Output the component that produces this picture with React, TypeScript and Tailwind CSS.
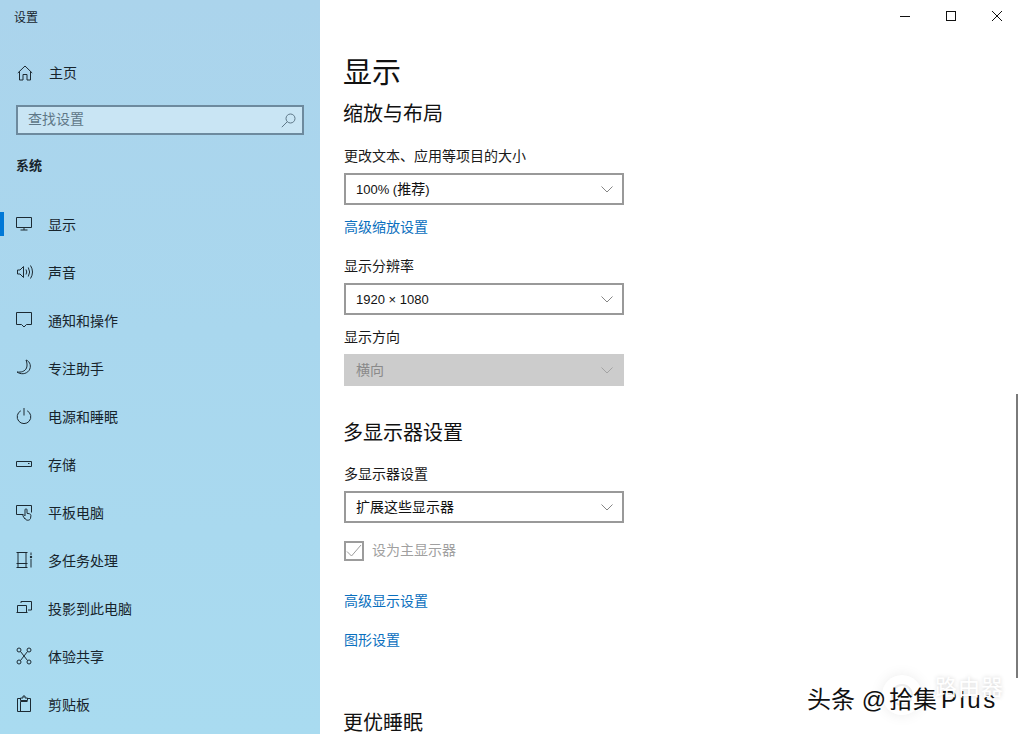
import React from "react";

const font = { fontFamily: '"Noto Sans CJK SC", sans-serif' };

function I({ children }: { children: React.ReactNode }) {
  return (
    <svg width="18" height="18" viewBox="0 0 18 18" fill="none" stroke="#1c2a33" strokeWidth="1" className="shrink-0">
      {children}
    </svg>
  );
}

const navItems: [string, React.ReactNode][] = [
  ["显示", <I key="a"><path d="M.5 2.500h15v10h-15zM8 12.500v2.500M4.500 15h7" /></I>],
  ["声音", <I key="b"><path d="M1.500 7h2.500l3.500-3.500v11l-3.500-3.500h-2.500zM10 6.500q1.500 2.500 0 5M12.300 4.500q2.700 4.500 0 9M14.500 2.500q4 6.500 0 13" /></I>],
  ["通知和操作", <I key="c"><path d="M.5 1.500h15v12h-5l-2.500 2.500-2.500-2.500h-5z" /></I>],
  ["专注助手", <I key="d"><path d="M10 1c4.500 1.500 5.500 7 3 10.500-3 4-8.500 4-12 1.500 4 .5 8-.5 9.500-4 1-2.500.5-5.500-.5-8z" /></I>],
  ["电源和睡眠", <I key="e"><path d="M8 1v7.500M4.800 3.800a6.800 6.800 0 1 0 6.400 0" /></I>],
  ["存储", <I key="f"><path d="M.5 6.500h15v5h-15zM12 8.500h1.500" /></I>],
  ["平板电脑", <I key="g"><path d="M7 11.500H.5v-9h15v7M9 16l-2-3c-.5-1 .7-1.700 1.400-.9l.6.700v-6c0-1.300 2-1.300 2 0v3.500l2.500.5c1 .2 1.500 1 1.400 2l-.4 2.700c-.8 2.300-4.500 2.300-5.500 0z" /></I>],
  ["多任务处理", <I key="h"><path d="M.5 1.500h11M.5 16.500h11M2 2v14M10 2v14M.5 12.500h11M15 1.500v2.500M15 8v8.500" /><circle cx="15" cy="6" r="1.200" fill="#1c2a33" stroke="none" /></I>],
  ["投影到此电脑", <I key="i"><path d="M5 4V2.500h10.500v8.500H12M1.500 6.500h9v7h-9zM.5 13.500h11" /></I>],
  ["体验共享", <I key="j"><circle cx="3" cy="3" r="2" /><circle cx="13" cy="3" r="2" /><circle cx="3" cy="15" r="2" /><circle cx="13" cy="15" r="2" /><path d="M4.500 4.500l7 9M11.500 4.500l-7 9" /></I>],
  ["剪贴板", <I key="k"><path d="M4.500 3.500h-3v13h13v-13h-3M4.500 16.500v-10h7M4.500 5.500v-2.500h2.500v-2h2v2h2.500v2.500z" /></I>],
];

function Chevron({ color = "#858585" }: { color?: string }) {
  return (
    <svg width="12" height="7" viewBox="0 0 12 7" fill="none" stroke={color} strokeWidth="1">
      <path d="M.5.5 6 6l5.500-5.500" />
    </svg>
  );
}

function Select({ children, className = "" }: { children: React.ReactNode; className?: string }) {
  return (
    <div className="flex h-8 w-[280px] items-center justify-between border-2 border-[#999999] bg-white pl-[10px] pr-[9px] text-[14px] text-[#111]">
      <span className={`leading-[18px] ${className}`}>{children}</span>
      <Chevron />
    </div>
  );
}

function Latin({ children }: { children: React.ReactNode }) {
  return <span className="font-['Liberation_Sans',sans-serif] text-[13px]">{children}</span>;
}

function Label({ children, className = "" }: { children: React.ReactNode; className?: string }) {
  return <div className={`h-5 text-[14px] leading-[18px] text-[#1a1a1a] ${className}`}>{children}</div>;
}

function Section({ children, className = "" }: { children: React.ReactNode; className?: string }) {
  return <h2 className={`-ml-px text-[20px] font-normal text-[#111] ${className}`}>{children}</h2>;
}

function Link({ children, className = "" }: { children: React.ReactNode; className?: string }) {
  return <div className={`h-5 text-[14px] leading-[18px] text-[#0a6fbe] ${className}`}>{children}</div>;
}

export default function App() {
  return (
    <div className="relative flex h-[734px] w-[1020px] overflow-hidden bg-white" style={font}>
      <aside className="flex h-full w-[320px] shrink-0 flex-col overflow-hidden bg-[linear-gradient(180deg,#abd4ec_0%,#a9d7ee_45%,#a9dbf0_100%)] text-[#17242c]">
        <div className="h-[32px] shrink-0 pl-[14px] text-[12px] leading-[34px]">设置</div>
        <div className="mt-[29px] flex h-6 shrink-0 items-center pl-[17px]">
          <svg width="16" height="16" viewBox="0 0 16 16" fill="none" stroke="#1c2a33" strokeWidth="1" className="shrink-0">
            <path d="M.8 8 8 1l7.200 7M2.500 6.500v8.500h3.500v-5.500h4v5.500h3.500v-8.500" />
          </svg>
          <span className="mb-[2px] ml-4 text-[14px] leading-[18px]">主页</span>
        </div>
        <div className="mx-4 mt-[20px] flex h-[30px] shrink-0 items-center justify-between border-2 border-[#6d8a9e] bg-[#c9e5f4] pl-[10px] pr-[6px]">
          <span className="mb-1 text-[14px] leading-4 text-[#5e7787]">查找设置</span>
          <svg width="15" height="15" viewBox="0 0 15 15" fill="none" stroke="#5e7787" strokeWidth="1">
            <circle cx="9.500" cy="5.500" r="4.500" />
            <path d="M6.300 8.700.8 14.200" />
          </svg>
        </div>
        <div className="mt-[21px] h-5 shrink-0 pl-4 text-[13px] leading-[18px] font-bold">系统</div>
        <nav className="mt-6 flex shrink-0 flex-col">
          {navItems.map(([label, icon], i) => (
            <div key={label} className="relative flex h-12 items-center pl-4">
              {i === 0 && <span className="absolute left-0 top-3 h-6 w-1 bg-[#0078d7]" />}
              {icon}
              <span className="ml-[14px] text-[14px] leading-[18px]">{label}</span>
            </div>
          ))}
        </nav>
      </aside>

      <main className="relative flex-1 overflow-hidden">
        <div className="flex h-8 justify-end">
          <div className="flex h-8 w-[46px] items-center justify-center">
            <span className="h-px w-[10px] bg-[#111]" />
          </div>
          <div className="flex h-8 w-[46px] items-center justify-center">
            <span className="size-[10px] border border-[#111]" />
          </div>
          <div className="flex h-8 w-[46px] items-center justify-center">
            <svg width="10" height="10" viewBox="0 0 10 10" stroke="#111" strokeWidth="1">
              <path d="M0 0l10 10M10 0 0 10" />
            </svg>
          </div>
        </div>
        <div className="pl-6 pt-[18px]">
          <h1 className="-ml-px h-11 text-[29px] leading-[40px] font-normal text-[#111]">显示</h1>
          <Section className="mt-[6px] h-7 leading-[26px]">缩放与布局</Section>
          <Label className="mt-[18px]">更改文本、应用等项目的大小</Label>
          <div className="mt-[7px]"><Select><Latin>100% (</Latin>推荐<Latin>)</Latin></Select></div>
          <Link className="mt-3">高级缩放设置</Link>
          <Label className="mt-[19px]">显示分辨率</Label>
          <div className="mt-[7px]"><Select><Latin>1920 × 1080</Latin></Select></div>
          <Label className="mt-3">显示方向</Label>
          <div className="mt-[7px] flex h-8 w-[280px] items-center justify-between bg-[#cccccc] pl-3 pr-[11px] text-[14px] text-[#8a8a8a]">
            <span className="mb-[2px] leading-4">横向</span>
            <Chevron color="#a3a3a3" />
          </div>
          <Section className="mt-8 h-7 leading-7">多显示器设置</Section>
          <Label className="mt-[18px]">多显示器设置</Label>
          <div className="mt-[7px]"><Select className="mb-[2px]">扩展这些显示器</Select></div>
          <div className="mt-[18px] flex h-5 items-center">
            <span className="flex size-5 items-center justify-center border-2 border-[#9c9c9c]">
              <svg width="16" height="14" viewBox="0 0 16 14" fill="none" stroke="#9c9c9c" strokeWidth="1">
                <path d="M1 7.500 5.500 12 15 1" />
              </svg>
            </span>
            <span className="mb-[5px] ml-2 text-[14px] leading-[16px] text-[#a0a0a0]">设为主显示器</span>
          </div>
          <Link className="mt-[30px]">高级显示设置</Link>
          <Link className="mt-[19px]">图形设置</Link>
          <Section className="mt-[58px] leading-7">更优睡眠</Section>
        </div>
        <span className="absolute left-[696px] top-[394px] h-[284px] w-[2px] bg-[#7a7a7a]" />
      </main>

      <span className="absolute left-[882px] top-[675px] flex size-[40px] items-center justify-center rounded-full bg-white shadow-[0_0_14px_rgba(0,0,0,0.08)]">
        <span className="size-[22px] rounded-full border-2 border-[#eeeeee]" />
      </span>
      <span className="absolute left-[807px] top-[684px] whitespace-nowrap font-['Liberation_Sans','Noto_Sans_CJK_SC',sans-serif] text-[24px] leading-8 text-[#111] [text-shadow:1px_1px_1px_#fff]">
        头条 @<span className="ml-[3px]">拾集</span><span className="ml-[4px] tracking-[2.5px]">Plus</span>
      </span>
      <span className="absolute left-[935px] top-[671px] text-[22px] leading-[28px] tracking-[1px] text-white [text-shadow:0_0_4px_rgba(0,0,0,0.18)]">路由器</span>
    </div>
  );
}
